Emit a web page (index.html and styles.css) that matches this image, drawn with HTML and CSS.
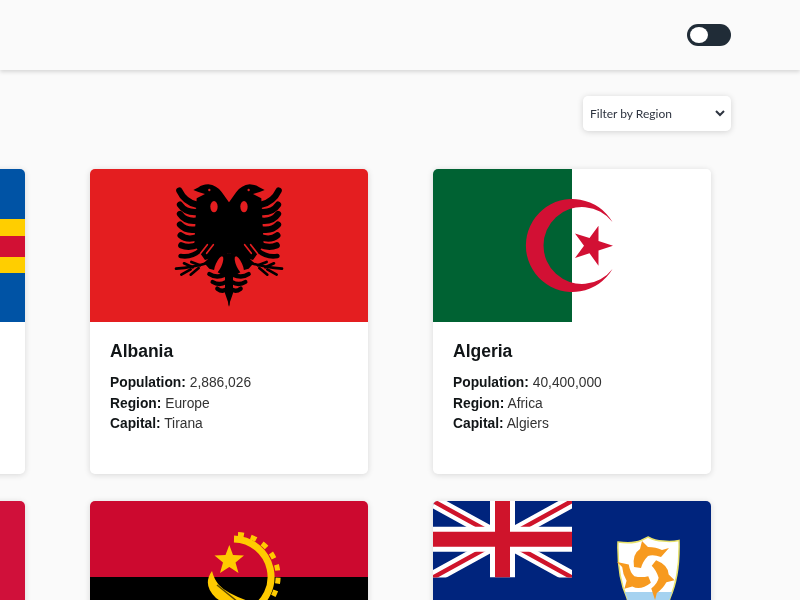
FILE: index.html
```html
<!DOCTYPE html>
<html lang="en">
<head>
<meta charset="utf-8">
<title>Countries</title>
<link rel="stylesheet" href="styles.css">
</head>
<body>
<div class="page">
<header class="topbar">
  <label class="switch" aria-label="Toggle dark mode"><span class="knob"></span></label>
</header>
<main class="content">
  <div class="filters">
    <select class="region">
      <option>Filter by Region</option>
      <option>Africa</option>
      <option>Americas</option>
      <option>Asia</option>
      <option>Europe</option>
      <option>Oceania</option>
    </select>
  </div>
  <section class="grid">
    <article class="card">
      <svg class="flag" viewBox="0 0 278 153" preserveAspectRatio="none">
        <rect width="278" height="153" fill="#0053a5"/>
        <rect y="50" width="278" height="54" fill="#ffce00"/>
        <rect x="70" width="54" height="153" fill="#ffce00"/>
        <rect y="67" width="278" height="21" fill="#d21034"/>
        <rect x="87" width="21" height="153" fill="#d21034"/>
      </svg>
      <div class="body">
        <h2>Åland Islands</h2>
        <p><b>Population:</b> 28,875</p>
        <p><b>Region:</b> Europe</p>
        <p><b>Capital:</b> Mariehamn</p>
      </div>
    </article>
    <article class="card">
      <svg class="flag" viewBox="0 0 278 153" preserveAspectRatio="none">
        <rect width="278" height="153" fill="#e41e20"/>
        <defs>
          <g id="eagle-half">
            <path d="M239 100L215 66Q200 46 175 43Q155 44 146 52L130 60Q148 68 165 72L140 85L133 225L165 270L205 258L239 250Z" fill="#000"/>
            <ellipse cx="192" cy="110" rx="11" ry="17" fill="#e41e20"/>
            <circle cx="178" cy="60" r="3.500" fill="#e41e20"/>
            <g fill="none" stroke="#000" stroke-linecap="round" stroke-width="19">
              <path d="M140 104Q104 96 88 62"/>
              <path d="M140 126Q106 128 90 104"/>
              <path d="M140 152Q106 156 90 132"/>
              <path d="M140 178Q108 184 90 164"/>
              <path d="M142 202Q110 212 92 196"/>
              <path d="M146 224Q116 236 94 226"/>
            </g>
            <path d="M152 240Q124 264 92 258" fill="none" stroke="#000" stroke-linecap="round" stroke-width="14"/>
            <g fill="none" stroke="#e41e20" stroke-linecap="round" stroke-width="5">
              <path d="M172 224L152 250"/>
              <path d="M190 224L170 250"/>
            </g>
            <g fill="none" stroke="#000" stroke-linecap="round" stroke-width="8">
              <path d="M175 278Q130 292 78 296"/>
              <path d="M128 292L102 280"/>
              <path d="M122 298L94 314"/>
              <path d="M150 286L124 276"/>
              <path d="M146 294L122 314"/>
            </g>
            <path d="M239 250L205 255L180 262L162 278L178 296L192 300L225 320L225 370L239 410Z" fill="#000"/>
            <ellipse cx="206" cy="285" rx="9" ry="28" transform="rotate(24 206 285)" fill="#e41e20"/>
            <g fill="none" stroke="#000" stroke-linecap="round" stroke-width="13">
              <path d="M225 314Q198 326 178 312"/>
              <path d="M228 336Q208 348 188 336"/>
              <path d="M232 356Q218 368 202 356"/>
            </g>
          </g>
        </defs>
        <g transform="translate(60 1) scale(.3333)">
          <use href="#eagle-half"/>
          <use href="#eagle-half" transform="translate(474 0) scale(-1 1)"/>
        </g>
      </svg>
      <div class="body">
        <h2>Albania</h2>
        <p><b>Population:</b> 2,886,026</p>
        <p><b>Region:</b> Europe</p>
        <p><b>Capital:</b> Tirana</p>
      </div>
    </article>
    <article class="card">
      <svg class="flag" viewBox="0 0 278 153" preserveAspectRatio="none">
        <rect width="278" height="153" fill="#fff"/>
        <rect width="139" height="153" fill="#006233"/>
        <path d="M179.500 53A46.500 46.500 0 1 0 179.500 100A38.500 38.500 0 1 1 179.500 53Z" fill="#d21034"/>
        <polygon points="180,76.700 165.500,81.400 165.500,96.700 156.500,84.300 142,89 151,76.700 142,64.400 156.500,69.100 165.500,56.700 165.500,72" fill="#d21034"/>
      </svg>
      <div class="body">
        <h2>Algeria</h2>
        <p><b>Population:</b> 40,400,000</p>
        <p><b>Region:</b> Africa</p>
        <p><b>Capital:</b> Algiers</p>
      </div>
    </article>
    <article class="card">
      <svg class="flag" viewBox="0 0 278 153" preserveAspectRatio="none">
        <rect width="278" height="153" fill="#d0103a"/>
      </svg>
      <div class="body">
        <h2>Andorra</h2>
        <p><b>Population:</b> 78,014</p>
        <p><b>Region:</b> Europe</p>
        <p><b>Capital:</b> Andorra la Vella</p>
      </div>
    </article>
    <article class="card">
      <svg class="flag" viewBox="0 0 278 153" preserveAspectRatio="none">
        <rect width="278" height="76" fill="#cc092f"/>
        <rect y="76" width="278" height="77" fill="#000"/>
        <polygon points="139.300,44 143,54 154,54.500 145.500,61.500 148.500,72 139.300,66 130,72 133,61.500 124.500,54.500 135.500,54" fill="#ffcb00"/>
        <path d="M144 38A38 38 0 0 1 160 110" fill="none" stroke="#ffcb00" stroke-width="7"/>
        <path d="M148 33.500A42 42 0 0 1 170 110" fill="none" stroke="#ffcb00" stroke-width="5" stroke-dasharray="6 7"/>
        <path d="M122 70Q112 84 126 97L148 112L158 100Q136 92 129 84Q124 78 122 70Z" fill="#ffcb00"/>
        <path d="M127 84L148 101" stroke="#5a4a00" stroke-width="1.500" fill="none"/>
      </svg>
      <div class="body">
        <h2>Angola</h2>
        <p><b>Population:</b> 25,868,000</p>
        <p><b>Region:</b> Africa</p>
        <p><b>Capital:</b> Luanda</p>
      </div>
    </article>
    <article class="card">
      <svg class="flag" viewBox="0 0 278 153" preserveAspectRatio="none">
        <defs>
          <clipPath id="canton"><rect width="139" height="76.500"/></clipPath>
          <clipPath id="shield"><path d="M185 41Q200 43 208 39.500L215 36Q222 40 230 40Q238 41 246 39.500Q247 75 237 97Q228 125 215 150Q202 125 194 97Q184 75 185 41Z"/></clipPath>
          <g id="dolphin">
            <path d="M-13 -3Q-15 -16 -7 -21L-5 -29L1 -23Q9 -23 15 -20L22 -22L14 -13Q6 -16 1 -14Q-4 -9 -6 -2Z" fill="#f79a1f"/>
          </g>
        </defs>
        <rect width="278" height="153" fill="#00247d"/>
        <g clip-path="url(#canton)">
          <path d="M0 0L139 76.500M139 0L0 76.500" stroke="#fff" stroke-width="13"/>
          <path d="M0 0L69.500 38.250M139 76.500L69.500 38.250M139 0L69.500 38.250M0 76.500L69.500 38.250" stroke="#cf142b" stroke-width="4.500"/>
          <path d="M69.500 0V76.500M0 38.250H139" stroke="#fff" stroke-width="25"/>
          <path d="M69.500 0V76.500M0 38.250H139" stroke="#cf142b" stroke-width="15"/>
        </g>
        <path d="M185 41Q200 43 208 39.500L215 36Q222 40 230 40Q238 41 246 39.500Q247 75 237 97Q228 125 215 150Q202 125 194 97Q184 75 185 41Z" fill="#fff" stroke="#e8e26a" stroke-width="1.500"/>
        <rect x="180" y="91" width="70" height="62" fill="#a5d2f0" clip-path="url(#shield)"/>
        <g transform="translate(214 69)">
          <use href="#dolphin"/>
          <use href="#dolphin" transform="rotate(120)"/>
          <use href="#dolphin" transform="rotate(240)"/>
        </g>
      </svg>
      <div class="body">
        <h2>Anguilla</h2>
        <p><b>Population:</b> 13,452</p>
        <p><b>Region:</b> Americas</p>
        <p><b>Capital:</b> The Valley</p>
      </div>
    </article>
  </section>
</main>
</div>
</body>
</html>
```
FILE: styles.css
```css
* { box-sizing: border-box; }
html, body { margin: 0; height: 100%; overflow: hidden; }
body {
  background: #fafafa;
  color: #111517;
  font-family: "Liberation Sans", Arial, sans-serif;
}
.page { filter: blur(0.6px); }
.topbar {
  height: 70px;
  background: #fafafa;
  box-shadow: 0 2px 4px rgba(0, 0, 0, 0.14);
  display: flex;
  align-items: center;
  justify-content: flex-end;
  padding-right: 69px;
  padding-bottom: 1px;
}
.switch {
  width: 44px;
  height: 22px;
  border-radius: 11px;
  background: #202c37;
  padding: 3px;
  display: flex;
}
.knob {
  width: 18px;
  height: 16px;
  border-radius: 50%;
  background: #fff;
}
.content { padding-top: 26px; }
.filters {
  display: flex;
  justify-content: flex-end;
  padding-right: 69px;
}
.region {
  width: 148px;
  height: 35px;
  padding-left: 3px;
  border: none;
  border-right: 3px solid #fff;
  border-radius: 5px;
  background: #fff;
  color: #2e3440;
  font-family: Lato, sans-serif;
  font-size: 12px;
  box-shadow: 0 1px 6px rgba(0, 0, 0, 0.16);
}
.grid {
  display: grid;
  grid-template-columns: repeat(3, 278px);
  column-gap: 65px;
  row-gap: 27px;
  margin: 38px 0 0 -253px;
}
.card {
  height: 305px;
  background: #fff;
  border-radius: 5px;
  overflow: hidden;
  box-shadow: 0 1px 6px rgba(0, 0, 0, 0.14);
}
.flag { display: block; width: 100%; height: 153px; }
.body { padding: 19px 20px; }
.body h2 {
  margin: 0 0 12px;
  font-size: 17.500px;
  line-height: 20px;
  font-weight: 700;
}
.body p {
  margin: 0;
  font-size: 13.800px;
  line-height: 20.500px;
  color: #333;
}
.body b { color: #111517; font-weight: 700; }
```
